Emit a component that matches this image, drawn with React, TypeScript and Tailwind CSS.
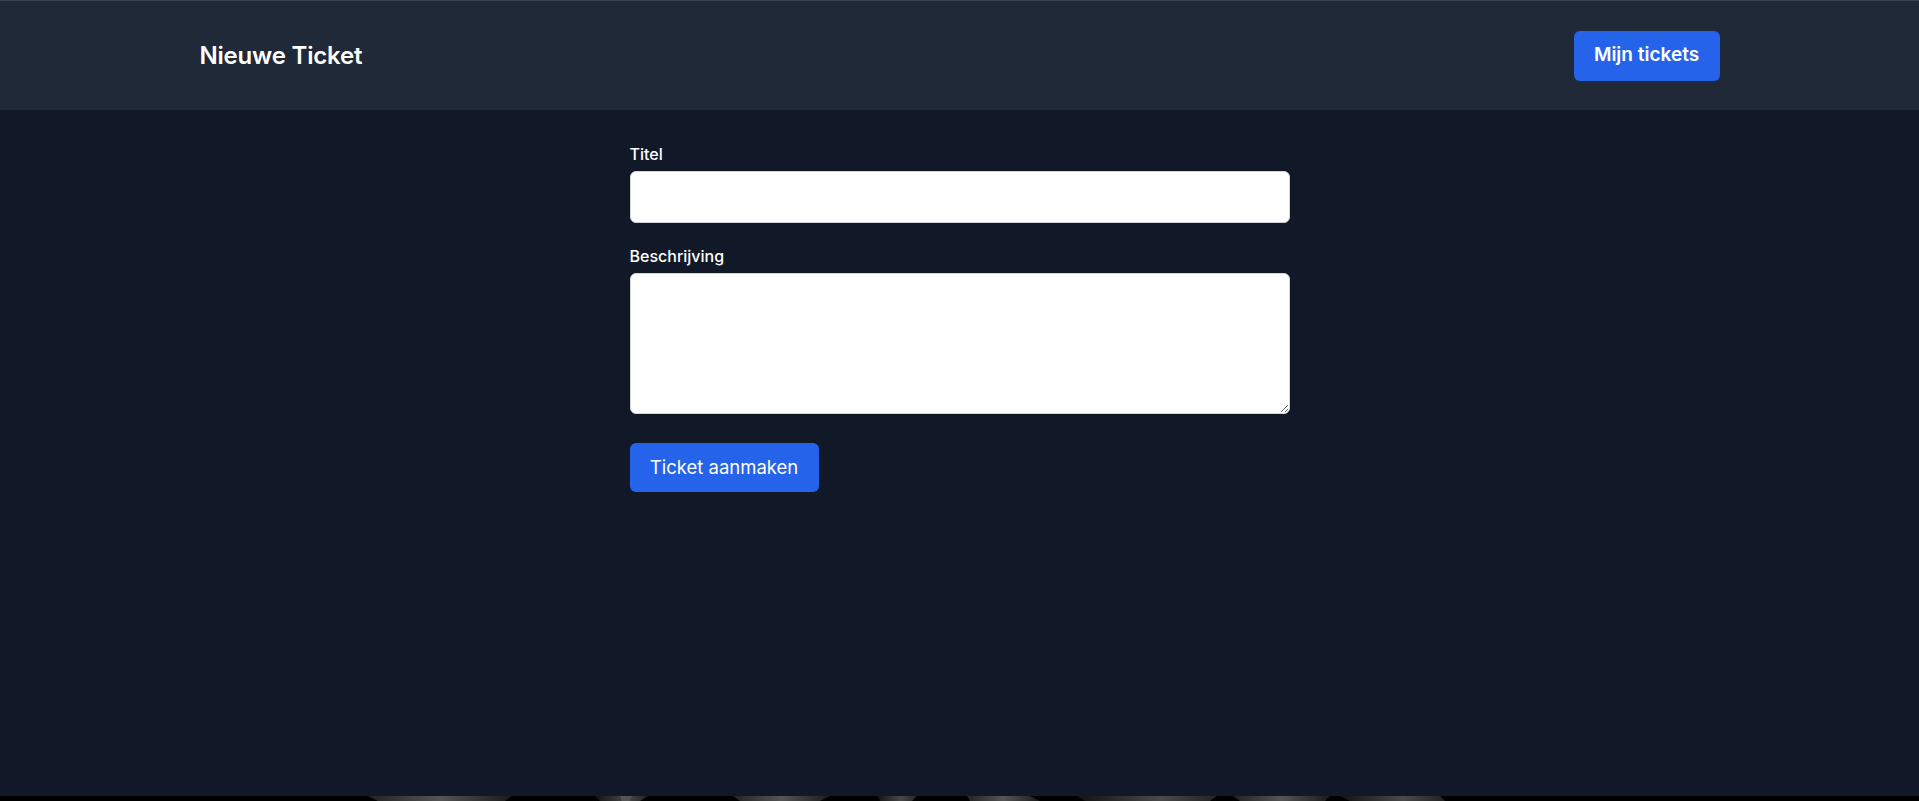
import React from "react";

export default function App() {
  return (
    <div className="w-full" style={{ fontFamily: "Inter, 'Noto Sans', sans-serif" }}>
      <div className="h-[796px] bg-[#111827] flex flex-col">
        <header className="h-[110px] shrink-0 bg-[#1f2937] border-t border-[#374151]">
          <div className="mx-auto w-[1520px] h-full flex items-center justify-between">
            <h1 className="text-[24px] font-semibold text-white tracking-[-0.2px]">Nieuwe Ticket</h1>
            <button className="h-[50px] w-[146px] rounded-md bg-[#2563eb] text-white text-[19px] font-semibold">
              Mijn tickets
            </button>
          </div>
        </header>
        <main className="pt-[32px]">
          <form className="mx-auto w-[660px] flex flex-col" onSubmit={(e) => e.preventDefault()}>
            <label className="block text-white text-[16px] leading-6 font-medium mb-[5px]">Titel</label>
            <input
              type="text"
              className="h-[52px] w-full rounded-md bg-white border border-gray-300 px-3 text-black outline-none"
            />
            <label className="block text-white text-[16px] leading-6 font-medium mt-[21px] mb-[5px]">Beschrijving</label>
            <textarea className="h-[141px] w-full rounded-md bg-white border border-gray-300 px-3 py-2 text-black outline-none" />
            <div className="mt-[29px]">
              <button
                type="submit"
                className="h-[49px] w-[189px] rounded-md bg-[#2563eb] text-white text-[18.5px] font-normal"
              >
                Ticket aanmaken
              </button>
            </div>
          </form>
        </main>
      </div>
      <div className="h-[5px] bg-black overflow-hidden">
        <svg width="1919" height="5" viewBox="0 0 1919 5" className="block">
          <defs>
            <linearGradient id="g1" x1="0" x2="1" y1="0" y2="0">
              <stop offset="0" stopColor="#222" />
              <stop offset="0.5" stopColor="#555" />
              <stop offset="1" stopColor="#1a1a1a" />
            </linearGradient>
            <linearGradient id="g2" x1="0" x2="1" y1="0" y2="0">
              <stop offset="0" stopColor="#111" />
              <stop offset="0.6" stopColor="#4a4a4a" />
              <stop offset="1" stopColor="#222" />
            </linearGradient>
          </defs>
          <polygon points="368,0 512,0 505,5 378,5" fill="url(#g1)" />
          <polygon points="595,0 648,0 640,5 600,5" fill="url(#g2)" />
          <polygon points="620,0 632,0 630,5 622,5" fill="#555" />
          <polygon points="733,0 830,0 820,5 740,5" fill="url(#g1)" />
          <polygon points="877,0 917,0 912,5 880,5" fill="url(#g2)" />
          <polygon points="967,0 1030,0 1040,5 970,5" fill="url(#g1)" />
          <polygon points="1077,0 1217,0 1210,5 1085,5" fill="url(#g2)" />
          <polygon points="1233,0 1330,0 1325,5 1240,5" fill="url(#g1)" />
          <polygon points="1340,0 1440,0 1445,5 1350,5" fill="url(#g2)" />
        </svg>
      </div>
    </div>
  );
}
